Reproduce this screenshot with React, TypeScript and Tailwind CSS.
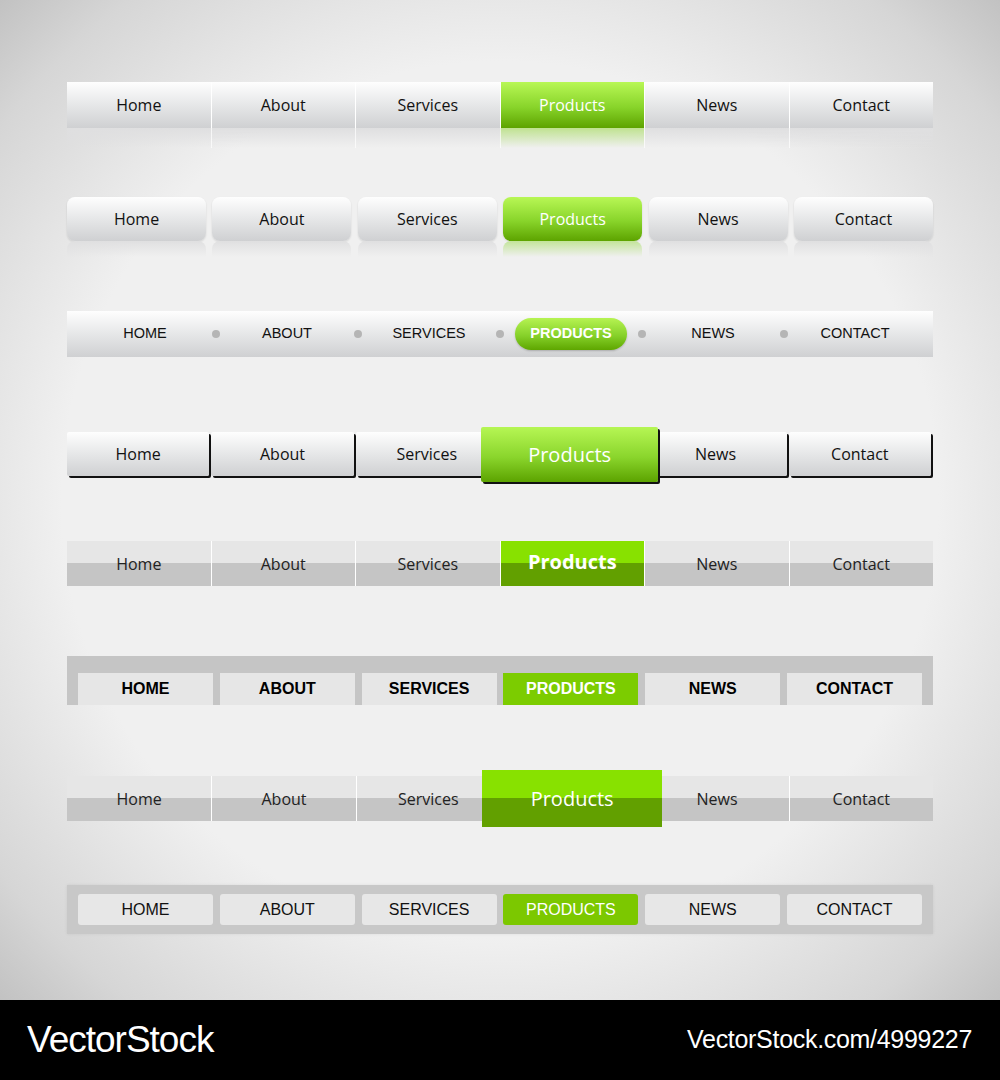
import React from "react";

const items = ["Home", "About", "Services", "Products", "News", "Contact"];

const OPEN = "font-['Open_Sans',sans-serif]";
const LIB = "font-['Liberation_Sans',Arial,sans-serif]";

function Bar1() {
  return (
    <div className="mt-[82px] h-[66px] flex flex-col">
      <div className={`flex h-[46px] ${OPEN} text-[16px]`}>
        {items.map((t, i) => (
          <div
            key={t}
            className={`flex-1 flex items-center justify-center ${i > 0 ? "border-l border-white" : ""} ${
              t === "Products"
                ? "bg-[linear-gradient(#b8f755,#88d42a_55%,#5da300)] text-white"
                : "bg-[linear-gradient(#fefefe,#e6e7e8_50%,#cfd0d2)] text-[#111]"
            }`}
          >
            {t}
          </div>
        ))}
      </div>
      <div className="flex h-[20px]">
        {items.map((t, i) => (
          <div
            key={t}
            className={`flex-1 ${i > 0 ? "border-l border-white/70" : ""} ${
              t === "Products"
                ? "bg-[linear-gradient(#bfe290,rgba(240,240,240,0))]"
                : "bg-[linear-gradient(#dfdfe0,rgba(240,240,240,0))]"
            }`}
          />
        ))}
      </div>
    </div>
  );
}

function Bar2() {
  return (
    <div className="mt-[49px] h-[60px] flex flex-col">
      <div className={`flex justify-between h-[44px] ${OPEN} text-[16px]`}>
        {items.map((t) => (
          <div
            key={t}
            className={`w-[139px] rounded-[8px] flex items-center justify-center shadow-[0_1px_2px_rgba(0,0,0,0.12)] ${
              t === "Products"
                ? "bg-[linear-gradient(#b8f755,#88d42a_55%,#5da300)] text-white"
                : "bg-[linear-gradient(#fefefe,#e6e7e8_50%,#cfd0d2)] text-[#111]"
            }`}
          >
            {t}
          </div>
        ))}
      </div>
      <div className="flex justify-between h-[16px]">
        {items.map((t) => (
          <div
            key={t}
            className={`w-[139px] rounded-t-[8px] ${
              t === "Products"
                ? "bg-[linear-gradient(#c3e49a,rgba(240,240,240,0))]"
                : "bg-[linear-gradient(#e0e0e1,rgba(240,240,240,0))]"
            }`}
          />
        ))}
      </div>
    </div>
  );
}

function Bar3() {
  const up = ["HOME", "ABOUT", "SERVICES", "PRODUCTS", "NEWS", "CONTACT"];
  return (
    <div
      className={`mt-[54px] h-[46px] flex items-center px-[11px] bg-[linear-gradient(#fefefe,#e6e7e8_50%,#cfd0d2)] ${LIB} text-[14.5px] text-[#111]`}
    >
      {up.map((t, i) => (
        <React.Fragment key={t}>
          {i > 0 && <div className="w-[8px] h-[8px] rounded-full bg-[#b5b5b5] shrink-0" />}
          <div className="flex-1 flex items-center justify-center">
            {t === "PRODUCTS" ? (
              <div className="w-[112px] h-[32px] shrink-0 rounded-full flex items-center justify-center text-white font-bold bg-[linear-gradient(#b6f352,#86d12a_55%,#5ea600)] shadow-[0_1px_2px_rgba(0,0,0,0.2)]">
                {t}
              </div>
            ) : (
              t
            )}
          </div>
        </React.Fragment>
      ))}
    </div>
  );
}

function Bar4() {
  return (
    <div className={`mt-[70px] h-[57px] pr-[2px] grid grid-cols-6 gap-[2px] items-start ${OPEN}`}>
      {items.map((t) =>
        t === "Products" ? (
          <div
            key={t}
            className="relative z-10 ml-[-19px] mr-[-16px] h-[55px] flex items-center justify-center text-white text-[20px] bg-[linear-gradient(#b6f654,#8ad52c_55%,#5ca300)] shadow-[2px_2px_0_#111] rounded-[2px]"
          >
            {t}
          </div>
        ) : (
          <div
            key={t}
            className="mt-[5px] h-[44px] flex items-center justify-center text-[16px] text-[#111] bg-[linear-gradient(#fefefe,#e6e7e8_50%,#cfd0d2)] shadow-[2px_2px_0_#111] rounded-[2px]"
          >
            {t}
          </div>
        )
      )}
    </div>
  );
}

function Bar5() {
  return (
    <div className={`mt-[57px] h-[45px] flex ${OPEN}`}>
      {items.map((t, i) => (
        <div
          key={t}
          className={`flex-1 flex items-center justify-center ${i > 0 ? "border-l border-white" : ""} ${
            t === "Products"
              ? "bg-[linear-gradient(#88e100_50%,#62a000_50%)] text-white font-bold text-[20px] pb-[3px]"
              : "bg-[linear-gradient(#e6e6e6_50%,#c5c5c5_50%)] text-[#222] text-[16px]"
          }`}
        >
          {t}
        </div>
      ))}
    </div>
  );
}

function Bar6() {
  const up = ["HOME", "ABOUT", "SERVICES", "PRODUCTS", "NEWS", "CONTACT"];
  return (
    <div className={`mt-[70px] h-[49px] bg-[#c5c5c5] px-[11px] pt-[17px] flex justify-between ${LIB} font-bold text-[16px]`}>
      {up.map((t) => (
        <div
          key={t}
          className={`w-[135px] h-[32px] flex items-center justify-center ${
            t === "PRODUCTS" ? "bg-[#7ccc00] text-white" : "bg-[#e6e6e6] text-black"
          }`}
        >
          {t}
        </div>
      ))}
    </div>
  );
}

function Bar7() {
  return (
    <div className={`mt-[65px] h-[57px] grid grid-cols-6 items-center ${OPEN}`}>
      {items.map((t, i) =>
        t === "Products" ? (
          <div
            key={t}
            className="relative z-10 mx-[-18px] h-[57px] flex items-center justify-center text-white text-[20px] bg-[linear-gradient(#88e100_50%,#62a000_50%)]"
          >
            {t}
          </div>
        ) : (
          <div
            key={t}
            className={`h-[45px] flex items-center justify-center text-[16px] text-[#222] bg-[linear-gradient(#e6e6e6_50%,#c5c5c5_50%)] ${
              i > 0 ? "border-l border-white" : ""
            }`}
          >
            {t}
          </div>
        )
      )}
    </div>
  );
}

function Bar8() {
  const up = ["HOME", "ABOUT", "SERVICES", "PRODUCTS", "NEWS", "CONTACT"];
  return (
    <div className={`mt-[58px] h-[49px] bg-[#c8c8c8] px-[11px] flex items-center justify-between ${LIB} text-[16px] shadow-[0_0_3px_rgba(0,0,0,0.08)]`}>
      {up.map((t) => (
        <div
          key={t}
          className={`w-[135px] h-[31px] rounded-[3px] flex items-center justify-center ${
            t === "PRODUCTS" ? "bg-[#7cc800] text-white" : "bg-[#e7e7e7] text-[#111]"
          }`}
        >
          {t}
        </div>
      ))}
    </div>
  );
}

export default function App() {
  return (
    <div className="w-[1000px] h-[1080px] flex flex-col">
      <div className="h-[1000px] px-[67px] flex flex-col bg-[radial-gradient(ellipse_at_center,#f0f0f0_62%,#d6d6d6_88%,#c2c2c2_100%)]">
        <Bar1 />
        <Bar2 />
        <Bar3 />
        <Bar4 />
        <Bar5 />
        <Bar6 />
        <Bar7 />
        <Bar8 />
      </div>
      <div className={`h-[80px] bg-black flex items-center justify-between pl-[27px] pr-[28px] text-white ${LIB}`}>
        <span className="text-[37px] tracking-[-1px]">VectorStock</span>
        <span className="text-[25px] tracking-[-0.3px]">VectorStock.com/4999227</span>
      </div>
    </div>
  );
}
